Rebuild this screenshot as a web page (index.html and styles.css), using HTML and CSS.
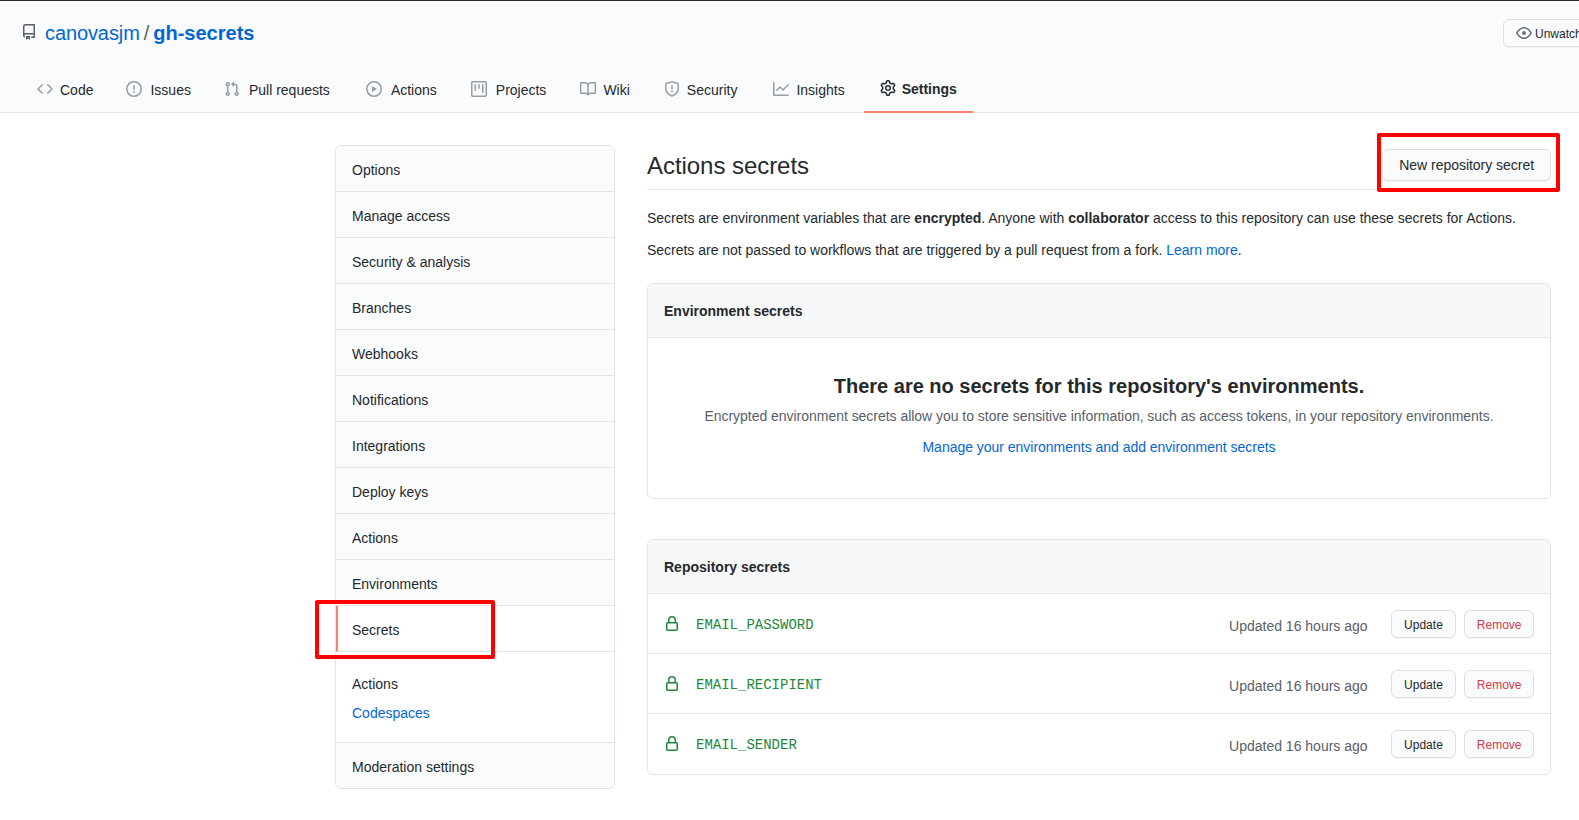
FILE: index.html
```html
<!DOCTYPE html>
<html lang="en">
<head>
<meta charset="utf-8">
<title>Actions secrets</title>
<link rel="stylesheet" href="styles.css">
</head>
<body>
<header class="repo-head">
  <div class="title-row">
    <h1 class="repo-title">
      <svg class="icon repo-icon" viewBox="0 0 16 16"><path fill-rule="evenodd" d="M2 2.5A2.5 2.5 0 014.5 0h8.75a.75.75 0 01.75.75v12.5a.75.75 0 01-.75.75h-2.5a.75.75 0 110-1.5h1.75v-2h-8a1 1 0 00-.714 1.7.75.75 0 01-1.072 1.05A2.495 2.495 0 012 11.5v-9zm10.5-1V9h-8c-.356 0-.694.074-1 .208V2.5a1 1 0 011-1h8zM5 12.25v3.25a.25.25 0 00.4.2l1.45-1.087a.25.25 0 01.3 0L8.6 15.7a.25.25 0 00.4-.2v-3.25a.25.25 0 00-.25-.25h-3.5a.25.25 0 00-.25.25z"/></svg>
      <a class="owner" href="#">canovasjm</a><span class="slash">/</span><a class="repo" href="#">gh-secrets</a>
    </h1>
    <button class="btn watch"><svg class="icon eye" viewBox="0 0 16 16"><path fill-rule="evenodd" d="M1.679 7.932c.412-.621 1.242-1.75 2.366-2.717C5.175 4.242 6.527 3.5 8 3.5c1.473 0 2.824.742 3.955 1.715 1.124.967 1.954 2.096 2.366 2.717a.119.119 0 010 .136c-.412.621-1.242 1.75-2.366 2.717C10.825 11.758 9.473 12.5 8 12.5c-1.473 0-2.824-.742-3.955-1.715C2.92 9.818 2.09 8.69 1.679 8.068a.119.119 0 010-.136zM8 2c-1.981 0-3.67.992-4.933 2.078C1.797 5.169.88 6.423.43 7.1a1.619 1.619 0 000 1.798c.45.678 1.367 1.932 2.637 3.024C4.329 13.008 6.019 14 8 14c1.981 0 3.67-.992 4.933-2.078 1.27-1.091 2.187-2.345 2.637-3.023a1.619 1.619 0 000-1.798c-.45-.678-1.367-1.932-2.637-3.023C11.671 2.992 9.981 2 8 2zm0 8a2 2 0 100-4 2 2 0 000 4z"/></svg>Unwatch</button>
  </div>
  <nav class="tabs">
    <a class="tab" href="#"><svg class="icon" viewBox="0 0 16 16"><path fill-rule="evenodd" d="M4.72 3.22a.75.75 0 011.06 1.06L2.06 8l3.72 3.72a.75.75 0 11-1.06 1.06L.47 8.53a.75.75 0 010-1.06l4.25-4.25zm6.56 0a.75.75 0 10-1.06 1.06L13.94 8l-3.72 3.72a.75.75 0 101.06 1.06l4.25-4.25a.75.75 0 000-1.06l-4.25-4.25z"/></svg>Code</a>
    <a class="tab" href="#"><svg class="icon" viewBox="0 0 16 16"><path fill-rule="evenodd" d="M8 1.5a6.5 6.5 0 100 13 6.5 6.5 0 000-13zM0 8a8 8 0 1116 0A8 8 0 010 8zm9 3a1 1 0 11-2 0 1 1 0 012 0zm-.25-6.25a.75.75 0 00-1.5 0v3.5a.75.75 0 001.5 0v-3.5z"/></svg>Issues</a>
    <a class="tab" href="#"><svg class="icon" viewBox="0 0 16 16"><path fill-rule="evenodd" d="M7.177 3.073L9.573.677A.25.25 0 0110 .854v4.792a.25.25 0 01-.427.177L7.177 3.427a.25.25 0 010-.354zM3.75 2.5a.75.75 0 100 1.5.75.75 0 000-1.5zm-2.25.75a2.25 2.25 0 113 2.122v5.256a2.251 2.251 0 11-1.5 0V5.372A2.25 2.25 0 011.5 3.25zM11 2.5h-1V4h1a1 1 0 011 1v5.628a2.251 2.251 0 101.5 0V5A2.5 2.5 0 0011 2.5zm1 10.25a.75.75 0 111.5 0 .75.75 0 01-1.5 0zM3.75 12a.75.75 0 100 1.5.75.75 0 000-1.5z"/></svg>Pull requests</a>
    <a class="tab" href="#"><svg class="icon" viewBox="0 0 16 16"><path fill-rule="evenodd" d="M1.5 8a6.5 6.5 0 1113 0 6.5 6.5 0 01-13 0zM8 0a8 8 0 100 16A8 8 0 008 0zM6.379 5.227A.25.25 0 006 5.442v5.117a.25.25 0 00.379.214l4.264-2.559a.25.25 0 000-.428L6.379 5.227z"/></svg>Actions</a>
    <a class="tab" href="#"><svg class="icon" viewBox="0 0 16 16"><path fill-rule="evenodd" d="M1.75 0A1.75 1.75 0 000 1.75v12.5C0 15.216.784 16 1.75 16h12.5A1.75 1.75 0 0016 14.25V1.75A1.75 1.75 0 0014.25 0H1.75zM1.5 1.75a.25.25 0 01.25-.25h12.5a.25.25 0 01.25.25v12.5a.25.25 0 01-.25.25H1.75a.25.25 0 01-.25-.25V1.75zM11.75 3a.75.75 0 00-.75.75v7.5a.75.75 0 001.5 0v-7.5a.75.75 0 00-.75-.75zm-8.25.75a.75.75 0 011.5 0v5.5a.75.75 0 01-1.5 0v-5.5zM8 3a.75.75 0 00-.75.75v3.5a.75.75 0 001.5 0v-3.5A.75.75 0 008 3z"/></svg>Projects</a>
    <a class="tab" href="#"><svg class="icon" viewBox="0 0 16 16"><path fill-rule="evenodd" d="M0 1.75A.75.75 0 01.75 1h4.253c1.227 0 2.317.59 3 1.501A3.744 3.744 0 0111.006 1h4.245a.75.75 0 01.75.75v10.5a.75.75 0 01-.75.75h-4.507a2.25 2.25 0 00-1.591.659l-.622.621a.75.75 0 01-1.06 0l-.622-.621A2.25 2.25 0 005.258 13H.75a.75.75 0 01-.75-.75V1.75zm8.755 3a2.25 2.25 0 012.25-2.25H14.5v9h-3.757c-.71 0-1.4.201-1.992.572l.004-7.322zm-1.504 7.324l.004-5.073-.002-2.253A2.25 2.25 0 005.003 2.5H1.5v9h3.757a3.75 3.75 0 011.994.574z"/></svg>Wiki</a>
    <a class="tab" href="#"><svg class="icon" viewBox="0 0 16 16"><path fill-rule="evenodd" d="M7.467.133a1.75 1.75 0 011.066 0l5.25 1.68A1.75 1.75 0 0115 3.48V7c0 1.566-.32 3.182-1.303 4.682-.983 1.498-2.585 2.813-5.032 3.855a1.7 1.7 0 01-1.33 0c-2.447-1.042-4.049-2.357-5.032-3.855C1.32 10.182 1 8.566 1 7V3.48a1.75 1.75 0 011.217-1.667l5.25-1.68zm.61 1.429a.25.25 0 00-.153 0l-5.25 1.68a.25.25 0 00-.174.238V7c0 1.358.275 2.666 1.057 3.86.784 1.194 2.121 2.34 4.366 3.297a.2.2 0 00.154 0c2.245-.956 3.582-2.104 4.366-3.298C13.225 9.666 13.5 8.36 13.5 7V3.48a.25.25 0 00-.174-.237l-5.25-1.68zM9 10.5a1 1 0 11-2 0 1 1 0 012 0zm-.25-5.75a.75.75 0 10-1.5 0v3a.75.75 0 001.5 0v-3z"/></svg>Security</a>
    <a class="tab" href="#"><svg class="icon" viewBox="0 0 16 16"><path fill-rule="evenodd" d="M1.5 1.75a.75.75 0 00-1.5 0v12.5c0 .414.336.75.75.75h14.5a.75.75 0 000-1.5H1.5V1.75zm14.28 2.53a.75.75 0 00-1.06-1.06L10 7.94 7.53 5.47a.75.75 0 00-1.06 0L3.22 8.72a.75.75 0 001.06 1.06L7 7.06l2.47 2.47a.75.75 0 001.06 0l5.25-5.25z"/></svg>Insights</a>
    <a class="tab selected" href="#"><svg class="icon" viewBox="0 0 16 16"><path fill-rule="evenodd" d="M7.429 1.525a6.593 6.593 0 011.142 0c.036.003.108.036.137.146l.289 1.105c.147.56.55.967.997 1.189.174.086.341.183.501.29.417.278.97.423 1.53.27l1.102-.303c.11-.03.175.016.195.046.219.31.41.641.573.989.014.031.022.11-.059.19l-.815.806c-.411.406-.562.957-.53 1.456a4.588 4.588 0 010 .582c-.032.499.119 1.05.53 1.456l.815.806c.08.08.073.159.059.19a6.494 6.494 0 01-.573.99c-.02.029-.086.074-.195.045l-1.103-.303c-.559-.153-1.112-.008-1.529.27-.16.107-.327.204-.5.29-.449.222-.851.628-.998 1.189l-.289 1.105c-.029.11-.101.143-.137.146a6.613 6.613 0 01-1.142 0c-.036-.003-.108-.037-.137-.146l-.289-1.105c-.147-.56-.55-.967-.997-1.189a4.502 4.502 0 01-.501-.29c-.417-.278-.97-.423-1.53-.27l-1.102.303c-.11.03-.175-.016-.195-.046a6.492 6.492 0 01-.573-.989c-.014-.031-.022-.11.059-.19l.815-.806c.411-.406.562-.957.53-1.456a4.587 4.587 0 010-.582c.032-.499-.119-1.05-.53-1.456l-.815-.806c-.08-.08-.073-.159-.059-.19a6.44 6.44 0 01.573-.99c.02-.029.086-.075.195-.045l1.103.303c.559.153 1.112.008 1.529-.27.16-.107.327-.204.5-.29.449-.222.851-.628.998-1.189l.289-1.105c.029-.11.101-.143.137-.146zM8 0c-.236 0-.47.01-.701.03-.743.065-1.29.615-1.458 1.261l-.29 1.106c-.017.066-.078.158-.211.224a5.994 5.994 0 00-.668.386c-.123.082-.233.09-.3.071L3.27 2.776c-.644-.177-1.392.02-1.82.63a7.977 7.977 0 00-.704 1.217c-.315.675-.111 1.422.363 1.891l.815.806c.05.048.098.147.088.294a6.084 6.084 0 000 .772c.01.147-.038.246-.088.294l-.815.806c-.474.469-.678 1.216-.363 1.891.2.428.436.835.704 1.218.428.609 1.176.806 1.82.63l1.103-.303c.066-.019.176-.011.299.071.213.143.436.272.668.386.133.066.194.158.212.224l.289 1.106c.169.646.715 1.196 1.458 1.26a8.094 8.094 0 001.402 0c.743-.064 1.29-.614 1.458-1.26l.29-1.106c.017-.066.078-.158.211-.224a5.98 5.98 0 00.668-.386c.123-.082.233-.09.3-.071l1.102.302c.644.177 1.392-.02 1.82-.63.268-.382.505-.789.704-1.217.315-.675.111-1.422-.364-1.891l-.814-.806c-.05-.048-.098-.147-.088-.294a6.1 6.1 0 000-.772c-.01-.147.039-.246.088-.294l.814-.806c.475-.469.679-1.216.364-1.891a7.992 7.992 0 00-.704-1.218c-.428-.609-1.176-.806-1.82-.63l-1.103.303c-.066.019-.176.011-.299-.071a5.991 5.991 0 00-.668-.386c-.133-.066-.194-.158-.212-.224L10.16 1.29C9.99.645 9.444.095 8.701.031A8.094 8.094 0 008 0zm1.5 8a1.5 1.5 0 11-3 0 1.5 1.5 0 013 0zM11 8a3 3 0 11-6 0 3 3 0 016 0z"/></svg>Settings</a>
  </nav>
</header>

<div class="layout">
  <aside class="menu">
    <a class="menu-item" href="#">Options</a>
    <a class="menu-item" href="#">Manage access</a>
    <a class="menu-item" href="#">Security &amp; analysis</a>
    <a class="menu-item" href="#">Branches</a>
    <a class="menu-item" href="#">Webhooks</a>
    <a class="menu-item" href="#">Notifications</a>
    <a class="menu-item" href="#">Integrations</a>
    <a class="menu-item" href="#">Deploy keys</a>
    <a class="menu-item" href="#">Actions</a>
    <a class="menu-item" href="#">Environments</a>
    <a class="menu-item selected" href="#">Secrets</a>
    <div class="menu-sub">
      <a class="sub-link" href="#">Actions</a>
      <a class="sub-link link" href="#">Codespaces</a>
    </div>
    <a class="menu-item last" href="#">Moderation settings</a>
  </aside>

  <main class="content">
    <div class="subhead">
      <h2 class="subhead-title">Actions secrets</h2>
      <button class="btn new-secret">New repository secret</button>
    </div>
    <p class="intro">Secrets are environment variables that are <b>encrypted</b>. Anyone with <b>collaborator</b> access to this repository can use these secrets for Actions.</p>
    <p class="intro second">Secrets are not passed to workflows that are triggered by a pull request from a fork. <a class="link" href="#">Learn more</a>.</p>

    <section class="box env-box">
      <h3 class="box-head">Environment secrets</h3>
      <div class="blank">
        <h3 class="blank-title">There are no secrets for this repository's environments.</h3>
        <p class="blank-text">Encrypted environment secrets allow you to store sensitive information, such as access tokens, in your repository environments.</p>
        <a class="link blank-link" href="#">Manage your environments and add environment secrets</a>
      </div>
    </section>

    <section class="box repo-box">
      <h3 class="box-head">Repository secrets</h3>
      <div class="row">
        <svg class="icon lock" viewBox="0 0 16 16"><path fill-rule="evenodd" d="M4 4v2h-.25A1.75 1.75 0 002 7.75v5.5c0 .966.784 1.75 1.75 1.75h8.5A1.75 1.75 0 0014 13.25v-5.5A1.75 1.75 0 0012.25 6H12V4a4 4 0 10-8 0zm6.5 2V4a2.5 2.5 0 00-5 0v2h5zM12 7.5h.25a.25.25 0 01.25.25v5.5a.25.25 0 01-.25.25h-8.5a.25.25 0 01-.25-.25v-5.5a.25.25 0 01.25-.25H12z"/></svg>
        <code class="name">EMAIL_PASSWORD</code>
        <span class="updated">Updated 16 hours ago</span>
        <button class="btn small">Update</button>
        <button class="btn small danger">Remove</button>
      </div>
      <div class="row">
        <svg class="icon lock" viewBox="0 0 16 16"><path fill-rule="evenodd" d="M4 4v2h-.25A1.75 1.75 0 002 7.75v5.5c0 .966.784 1.75 1.75 1.75h8.5A1.75 1.75 0 0014 13.25v-5.5A1.75 1.75 0 0012.25 6H12V4a4 4 0 10-8 0zm6.5 2V4a2.5 2.5 0 00-5 0v2h5zM12 7.5h.25a.25.25 0 01.25.25v5.5a.25.25 0 01-.25.25h-8.5a.25.25 0 01-.25-.25v-5.5a.25.25 0 01.25-.25H12z"/></svg>
        <code class="name">EMAIL_RECIPIENT</code>
        <span class="updated">Updated 16 hours ago</span>
        <button class="btn small">Update</button>
        <button class="btn small danger">Remove</button>
      </div>
      <div class="row">
        <svg class="icon lock" viewBox="0 0 16 16"><path fill-rule="evenodd" d="M4 4v2h-.25A1.75 1.75 0 002 7.75v5.5c0 .966.784 1.75 1.75 1.75h8.5A1.75 1.75 0 0014 13.25v-5.5A1.75 1.75 0 0012.25 6H12V4a4 4 0 10-8 0zm6.5 2V4a2.5 2.5 0 00-5 0v2h5zM12 7.5h.25a.25.25 0 01.25.25v5.5a.25.25 0 01-.25.25h-8.5a.25.25 0 01-.25-.25v-5.5a.25.25 0 01.25-.25H12z"/></svg>
        <code class="name">EMAIL_SENDER</code>
        <span class="updated">Updated 16 hours ago</span>
        <button class="btn small">Update</button>
        <button class="btn small danger">Remove</button>
      </div>
    </section>
  </main>
</div>

<div class="callout callout-button"></div>
<div class="callout callout-menu"></div>
</body>
</html>
```
FILE: styles.css
```css
* { box-sizing: border-box; }
html, body { height: 100%; }
body {
  margin: 0;
  overflow: hidden;
  background: #fff;
  color: #24292e;
  font: 14px/21px "Liberation Sans", Arial, sans-serif;
}
a { text-decoration: none; color: inherit; }
.icon { width: 16px; height: 16px; fill: currentColor; flex: none; }
.link { color: #0366d6; }

.repo-head {
  height: 113px;
  background: #fafbfc;
  border-top: 1px solid #24292e;
  border-bottom: 1px solid #e1e4e8;
}
.title-row {
  height: 68px;
  padding: 17px 0 0 21px;
  display: flex;
  justify-content: space-between;
  align-items: flex-start;
}
.repo-title {
  margin: 0;
  display: flex;
  align-items: center;
  font-size: 20px;
  font-weight: 400;
  line-height: 30px;
  color: #586069;
}
.repo-icon { margin: 0 8px 3px 0; color: #586069; }
.owner { color: #0366d6; letter-spacing: -0.1px; }
.slash { margin: 0 4px; }
.repo { color: #0366d6; font-weight: 700; }

.btn {
  font: 14px/20px "Liberation Sans", Arial, sans-serif;
  color: #24292e;
  background: #fafbfc;
  border: 1px solid #dcdfe3;
  border-radius: 6px;
  box-shadow: 0 1px 0 rgba(27,31,35,.04);
  white-space: nowrap;
}
.watch {
  width: 110px;
  height: 28px;
  margin: 1px -34px 0 0;
  display: flex;
  align-items: center;
  padding: 1px 12px 0;
  font-size: 12px;
  flex: none;
}
.eye { margin: -1px 3px 0 0; color: #6a737d; }

.tabs { display: flex; height: 43px; padding-left: 21px; }
.tab {
  display: flex;
  align-items: center;
  gap: 8px;
  padding: 0 16px;
  margin-right: 3px;
  height: 44px;
  color: #24292e;
  border-bottom: 2px solid transparent;
}
.tab:nth-child(1) { gap: 7px; margin-right: 1px; }
.tab:nth-child(2) { margin-right: 1px; }
.tab:nth-child(3) { gap: 9px; margin-right: 4px; }
.tab:nth-child(4), .tab:nth-child(5) { gap: 9px; margin-right: 2px; }
.tab:nth-child(6) { gap: 7px; margin-right: 2px; }
.tab:nth-child(7) { gap: 7px; margin-right: 4px; }
.tab:nth-child(8) { gap: 7px; }
.tab .icon { color: #959da5; margin-top: -2px; }
.tab.selected { gap: 6px; font-weight: 700; padding-bottom: 2px; border-bottom-color: #f9826c; }
.tab.selected .icon { color: #24292e; }

.layout {
  display: flex;
  align-items: flex-start;
  gap: 32px;
  padding: 32px 28px 0 335px;
}
.menu {
  width: 280px;
  flex: none;
  border: 1px solid #e1e4e8;
  border-radius: 6px;
  background: #fff;
}
.menu-item {
  display: flex;
  align-items: center;
  height: 46px;
  padding: 3px 16px 0;
  background: #fafbfc;
  border-bottom: 1px solid #e1e4e8;
}
.menu-item:first-child { border-radius: 6px 6px 0 0; }
.menu-item.last { border-bottom: 0; border-radius: 0 0 6px 6px; height: 45px; }
.menu-item.selected { background: #fff; border-left: 2px solid #f9826c; padding-left: 14px; }
.menu-sub {
  display: flex;
  flex-direction: column;
  gap: 8px;
  height: 91px;
  padding: 22px 16px 0;
  border-bottom: 1px solid #e1e4e8;
}

.content { width: 904px; flex: none; }
.subhead {
  display: flex;
  justify-content: space-between;
  align-items: center;
  height: 43px;
  margin-top: 2px;
  border-bottom: 1px solid #e1e4e8;
}
.subhead-title { margin: -4px 0 0; font-size: 24px; font-weight: 400; line-height: 36px; letter-spacing: -0.05px; }
.new-secret { height: 32px; padding: 0 16px; margin-top: -6px; letter-spacing: -0.03px; }
.intro { margin: 18px 0 0; letter-spacing: -0.008px; }
.intro.second { margin-top: 11px; letter-spacing: -0.015px; }

.box { border: 1px solid #e1e4e8; border-radius: 6px; }
.env-box { margin-top: 22px; height: 216px; }
.repo-box { margin-top: 40px; }
.box-head {
  margin: 0;
  height: 54px;
  display: flex;
  align-items: center;
  padding: 1px 16px 0;
  font-size: 14px;
  background: #f6f8fa;
  border-bottom: 1px solid #e1e4e8;
  border-radius: 6px 6px 0 0;
}
.blank { text-align: center; padding-top: 33px; }
.blank-title { margin: 0; font-size: 20px; line-height: 30px; }
.blank-text { margin: 5px 0 10px; color: #586069; letter-spacing: -0.03px; }
.blank-link { letter-spacing: -0.02px; }

.row {
  display: flex;
  align-items: center;
  height: 60px;
  padding: 0 16px;
  border-bottom: 1px solid #e1e4e8;
}
.row:last-child { border-bottom: 0; padding-bottom: 1px; }
.lock { color: #22863a; margin: 1px 16px 0 0; }
.name { font: 14px/21px "Liberation Mono", monospace; color: #22863a; margin-top: 4px; }
.updated { margin: 6px 23px 0 auto; color: #586069; }
.btn.small { height: 28px; padding: 2px 11.5px 0; font-size: 12px; }
.updated + .btn.small { padding: 2px 12.5px 0; margin-right: 8px; }
.btn.danger { color: #d73a49; }

.callout {
  position: absolute;
  border: 4px solid #ff0000;
  border-radius: 2px;
  pointer-events: none;
}
.callout-button { left: 1377px; top: 133px; width: 183px; height: 59px; }
.callout-menu { left: 315px; top: 600px; width: 180px; height: 59px; }
```
